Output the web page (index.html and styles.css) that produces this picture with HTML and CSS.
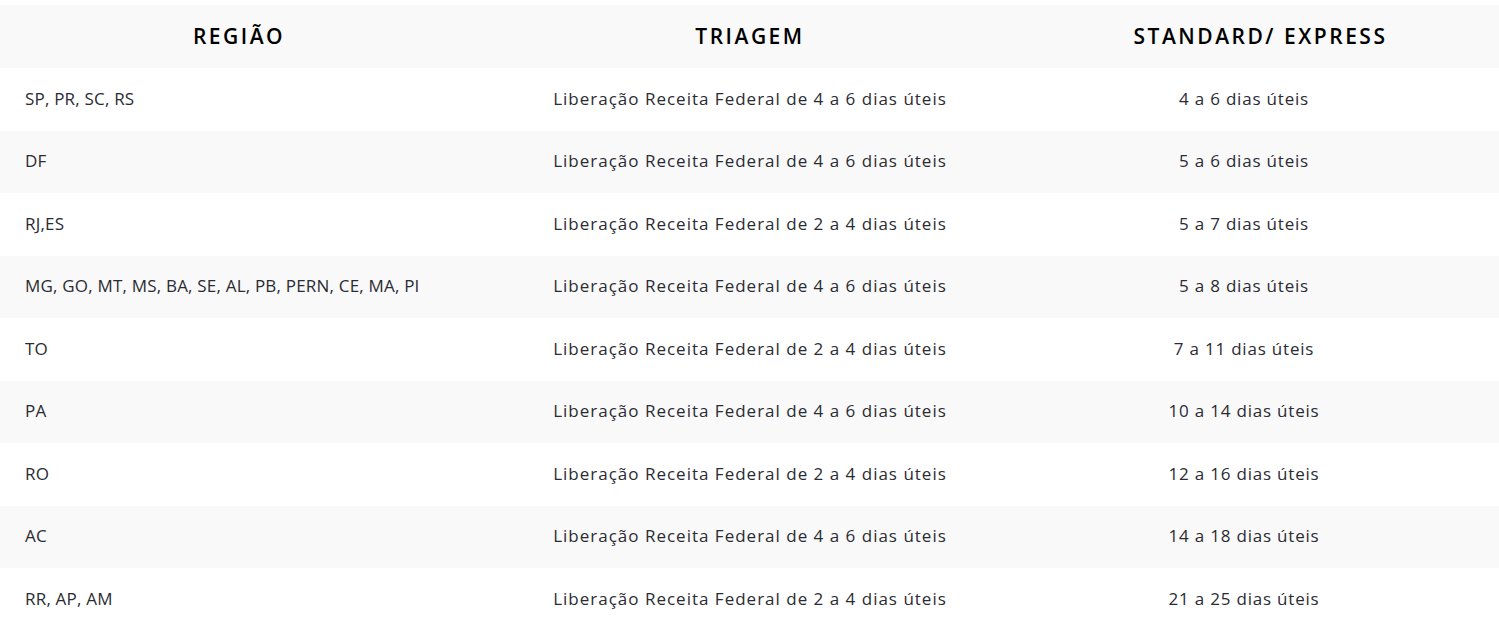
FILE: index.html
```html
<!DOCTYPE html>
<html lang="pt-BR">
<head>
  <meta charset="UTF-8">
  <meta name="viewport" content="width=device-width, initial-scale=1.0">
  <title>Prazos de entrega</title>
  <link rel="stylesheet" href="styles.css">
</head>
<body>
  <div class="prazos">
    <div class="row head">
      <div class="cell">REGIÃO</div>
      <div class="cell">TRIAGEM</div>
      <div class="cell">STANDARD/ EXPRESS</div>
    </div>
    <div class="row">
      <div class="cell">SP, PR, SC, RS</div>
      <div class="cell">Liberação Receita Federal de 4 a 6 dias úteis</div>
      <div class="cell">4 a 6 dias úteis</div>
    </div>
    <div class="row alt">
      <div class="cell">DF</div>
      <div class="cell">Liberação Receita Federal de 4 a 6 dias úteis</div>
      <div class="cell">5 a 6 dias úteis</div>
    </div>
    <div class="row">
      <div class="cell">RJ,ES</div>
      <div class="cell">Liberação Receita Federal de 2 a 4 dias úteis</div>
      <div class="cell">5 a 7 dias úteis</div>
    </div>
    <div class="row alt">
      <div class="cell">MG, GO, MT, MS, BA, SE, AL, PB, PERN, CE, MA, PI</div>
      <div class="cell">Liberação Receita Federal de 4 a 6 dias úteis</div>
      <div class="cell">5 a 8 dias úteis</div>
    </div>
    <div class="row">
      <div class="cell">TO</div>
      <div class="cell">Liberação Receita Federal de 2 a 4 dias úteis</div>
      <div class="cell">7 a 11 dias úteis</div>
    </div>
    <div class="row alt">
      <div class="cell">PA</div>
      <div class="cell">Liberação Receita Federal de 4 a 6 dias úteis</div>
      <div class="cell">10 a 14 dias úteis</div>
    </div>
    <div class="row">
      <div class="cell">RO</div>
      <div class="cell">Liberação Receita Federal de 2 a 4 dias úteis</div>
      <div class="cell">12 a 16 dias úteis</div>
    </div>
    <div class="row alt">
      <div class="cell">AC</div>
      <div class="cell">Liberação Receita Federal de 4 a 6 dias úteis</div>
      <div class="cell">14 a 18 dias úteis</div>
    </div>
    <div class="row">
      <div class="cell">RR, AP, AM</div>
      <div class="cell">Liberação Receita Federal de 2 a 4 dias úteis</div>
      <div class="cell">21 a 25 dias úteis</div>
    </div>
  </div>
</body>
</html>
```

FILE: styles.css
```css
body {
  margin: 0;
  padding-top: 5px;
  background: #fff;
  font-family: 'Open Sans', sans-serif;
  color: #2b2b33;
}

.prazos {
  width: 1499px;
}

.row {
  display: grid;
  grid-template-columns: 478px 544px 1fr;
  height: 62.5px;
  box-sizing: border-box;
  padding-bottom: 2px;
  align-items: center;
  font-size: 17px;
  letter-spacing: 1px;
}

.row.alt,
.row.head {
  background: #f9f9f9;
}

.row.head {
  height: 63px;
  padding-bottom: 1px;
  font-size: 21px;
  font-weight: 600;
  letter-spacing: 2.5px;
  color: #000;
}

.row.head .cell {
  text-align: center;
}

.row .cell:first-child {
  padding-left: 25px;
  letter-spacing: 0.2px;
}

.row.head .cell:first-child {
  padding-left: 0;
  letter-spacing: 2.5px;
}

.row .cell:nth-child(2) {
  text-align: center;
}

.row .cell:nth-child(3) {
  text-align: center;
  padding-right: 33px;
  letter-spacing: 0.8px;
}

.row.head .cell:nth-child(3) {
  padding-right: 0;
  letter-spacing: 2.5px;
}
```
